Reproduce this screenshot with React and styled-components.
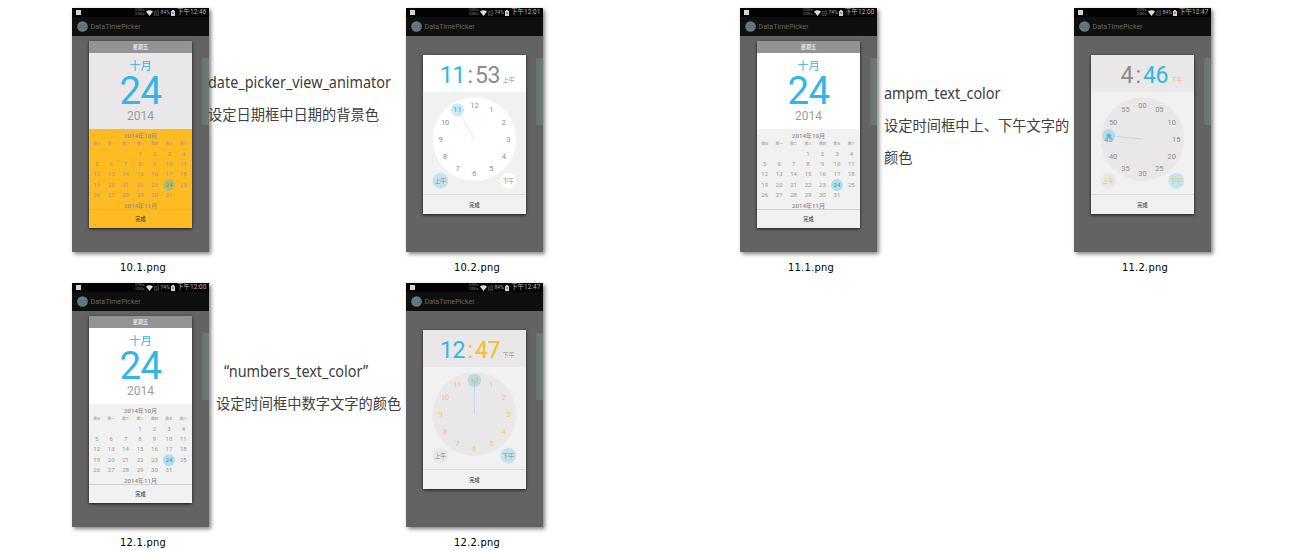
import React from "react";
import styled, { createGlobalStyle } from "styled-components";

const Global = createGlobalStyle`
  body { margin: 0; background: #fff; overflow: hidden; }
  * { box-sizing: border-box; }
`;

const cjk = `"Noto Sans CJK SC", sans-serif`;
const BLUE = "#33b5e5";
const GREY = "#8c8c8c";
const AMBER = "#ffbb22";
const MIST = "#e9e7e8";

const Page = styled.main`
  width: 1290px;
  height: 550px;
  padding: 8px 0 0 72px;
  display: grid;
  grid-template-columns: repeat(4, 334px);
  grid-auto-rows: 275px;
  align-content: start;
  overflow: hidden;
`;
const Cell = styled.section`
  grid-column: ${(p) => p.$col};
  grid-row: ${(p) => p.$row};
  display: flex;
  align-items: flex-start;
`;
const Figure = styled.figure`
  margin: 0;
  width: 137px;
  flex: none;
`;
const Caption = styled.figcaption`
  padding: 8px 0 0 5px;
  text-align: center;
  font: 11px/16px "DejaVu Sans Condensed", "DejaVu Sans", sans-serif;
  font-stretch: condensed;
  letter-spacing: 0.25px;
  color: #000;
`;
const Screen = styled.div`
  width: 137px;
  height: 244px;
  background: #636363;
  box-shadow: 2px 2px 4px rgba(0, 0, 0, 0.5);
  display: grid;
  grid-template: 9px 19px 216px / 17px 103px 10px 7px;
  font-family: Roboto, ${cjk};
`;
const StatusBar = styled.div`
  grid-column: 1 / -1;
  background: #030303;
  display: flex;
  align-items: center;
  padding: 0 2.5px 0 4px;
  gap: 1.4px;
  color: #aaa;
  font-size: 5px;
  line-height: 9px;
  white-space: nowrap;
`;
const Notice = styled.span`
  width: 5px;
  height: 5.5px;
  background: #d4d4d4;
  margin-right: auto;
`;
const Rates = styled.span`
  display: flex;
  flex-direction: column;
  font-size: 2.6px;
  line-height: 3.4px;
  text-align: right;
  color: #999;
`;
const Clock = styled.span`
  font-size: 6.4px;
  letter-spacing: 0.1px;
  margin-left: 0.5px;
  color: #b8b8b8;
`;
const AppBar = styled.div`
  grid-column: 1 / -1;
  background: #0f0f0f;
  display: flex;
  align-items: center;
  gap: 2.5px;
  padding-left: 5px;
  color: #666;
  font-size: 7px;
  letter-spacing: 0.05px;
`;
const Slider = styled.div`
  grid-column: 4;
  grid-row: 3;
  margin-top: 22px;
  height: 67px;
  background: linear-gradient(90deg, #697371, #6f7a78);
`;
const Dialog = styled.div`
  grid-column: 2;
  grid-row: 3;
  margin-top: ${(p) => p.$top}px;
  height: ${(p) => p.$height}px;
  background: ${(p) => p.$bg || "#f1f1f1"};
  box-shadow: 0 1px 3px rgba(0, 0, 0, 0.75);
  display: flex;
  flex-direction: column;
`;
const Weekday = styled.div`
  height: 11.5px;
  background: #939393;
  color: #f0f0f0;
  font: 500 5.2px/12px ${cjk};
  text-align: center;
`;
const DayPanel = styled.div`
  height: 76.5px;
  background: ${(p) => p.$bg};
  color: ${BLUE};
  display: flex;
  flex-direction: column;
  align-items: center;
  padding-top: 6px;
`;
const Month = styled.div`
  font: 400 11.3px/13px ${cjk};
`;
const Day = styled.div`
  font-size: 38.5px;
  line-height: 38px;
  height: 38px;
  letter-spacing: -0.7px;
`;
const Year = styled.div`
  font-size: 12px;
  line-height: 13px;
  color: #9c9c9c;
`;
const Calendar = styled.div`
  height: 81px;
  overflow: hidden;
  border-bottom: 1px solid rgba(175, 175, 175, 0.5);
`;
const MonthTitle = styled.div`
  text-align: center;
  font: 500 6.1px/8px Roboto, ${cjk};
  color: #8d8d88;
  padding-top: ${(p) => p.$pad}px;
`;
const Week = styled.div`
  display: grid;
  grid-template-columns: repeat(7, 14.45px);
  height: ${(p) => (p.$head ? 8 : 10.1)}px;
  align-items: center;
  justify-items: center;
  font-size: ${(p) => (p.$head ? 3.6 : 6)}px;
  font-weight: ${(p) => (p.$head ? 500 : 400)};
  color: #9a9a96;
  line-height: 1;
  padding-left: 0.5px;
`;
const DateCell = styled.span`
  width: 12px;
  height: 12px;
  line-height: 12px;
  text-align: center;
  border-radius: 50%;
  background: ${(p) => (p.$on ? "rgba(51,181,229,0.32)" : "transparent")};
  color: ${(p) => (p.$on ? "#2f9dbd" : "inherit")};
`;
const Done = styled.div`
  flex: 1;
  display: flex;
  align-items: center;
  justify-content: center;
  font: 500 5.2px/8px ${cjk};
  color: #444;
`;
const TimeHead = styled.div`
  height: 37px;
  background: ${(p) => p.$bg};
  display: grid;
  grid-template-columns: 42px 10px 27px auto;
  align-items: center;
  font-size: 23px;
  line-height: 38px;
  padding-top: 2px;
`;
const Digits = styled.span`
  color: ${(p) => p.$color};
  text-align: ${(p) => p.$align || "left"};
  letter-spacing: -0.4px;
`;
const Half = styled.span`
  font: 400 6px/8px ${cjk};
  color: ${(p) => p.$color};
  padding: 8px 0 0 0.7px;
`;
const Dial = styled.svg`
  height: 103px;
  width: 103px;
  flex: none;
  display: block;
  border-bottom: 1px solid #dcdcdc;
  font-family: Roboto, ${cjk};
`;
const Note = styled.div`
  margin: ${(p) => p.$top}px 0 0 ${(p) => p.$left}px;
  color: #404040;
  white-space: nowrap;
`;
const Line = styled.p`
  margin: 0 0 0 ${(p) => p.$indent || 0}px;
  font: 14.25px/32px ${cjk};
`;
const Code = styled(Line)`
  font: 16px/32px "Noto Sans", ${cjk};
  transform: scaleX(0.9);
  transform-origin: left;
  width: max-content;
`;

function Status({ time, battery }) {
  return (
    <StatusBar>
      <Notice />
      <Rates><span>0.01K/s</span><span>0.02K/s</span></Rates>
      <svg width="7" height="6" viewBox="0 0 7 6"><path d="M0 1.5Q3.5-1 7 1.5L3.5 6Z" fill="#dedede" /></svg>
      <svg width="5" height="6" viewBox="0 0 5 6"><path d="M.5 1.5h1.5v4H.5zM3 .5h1.5v5H3z" fill="none" stroke="#555" strokeWidth=".7" /></svg>
      <span>{battery}%</span>
      <svg width="4" height="6" viewBox="0 0 4 6"><path d="M1 0h2v1h1v5H0V1h1z" fill="#d0d0d0" /><path d="M1 2.5h2v1H1z" fill="#555" /></svg>
      <Clock>下午{time}</Clock>
    </StatusBar>
  );
}

function Phone({ name, time, battery, children }) {
  return (
    <Figure>
      <Screen>
        <Status time={time} battery={battery} />
        <AppBar>
          <svg width="11" height="11" viewBox="0 0 11 11">
            <circle cx="5.5" cy="5.5" r="5.3" fill="#6b777b" />
            <path d="M.5 4.3h10v2.5H.5z" fill="#44707f" />
            <path d="M2 5.5h7" stroke="#839ba3" strokeWidth=".7" strokeDasharray="1 .6" />
          </svg>
          DataTimePicker
        </AppBar>
        {children}
        <Slider />
      </Screen>
      <Caption>{name}</Caption>
    </Figure>
  );
}

const weekdays = ["周日", "周一", "周二", "周三", "周四", "周五", "周六"];
const weeks = [0, 1, 2, 3, 4].map((w) =>
  [0, 1, 2, 3, 4, 5, 6].map((d) => {
    const n = w * 7 + d - 2;
    return n > 0 && n < 32 ? n : "";
  })
);

function DatePicker({ bg, panel = "#fff" }) {
  return (
    <Dialog $top={5.3} $height={187} $bg={bg}>
      <Weekday>星期五</Weekday>
      <DayPanel $bg={panel}>
        <Month>十月</Month>
        <Day>24</Day>
        <Year>2014</Year>
      </DayPanel>
      <Calendar>
        <MonthTitle $pad={3}>2014年10月</MonthTitle>
        <Week $head>{weekdays.map((d) => <span key={d}>{d}</span>)}</Week>
        {weeks.map((w, i) => (
          <Week key={i}>{w.map((d, j) => <DateCell key={j} $on={d === 24}>{d}</DateCell>)}</Week>
        ))}
        <MonthTitle $pad={3.6}>2014年11月</MonthTitle>
      </Calendar>
      <Done>完成</Done>
    </Dialog>
  );
}

const CX = 51.4;
const CY = 47.6;
const at = (turn, r) => [CX + r * Math.sin(turn * 2 * Math.PI), CY - r * Math.cos(turn * 2 * Math.PI)];

function TimePicker(p) {
  const [hx, hy] = at(p.turn, 34.2);
  const labels = Array.from({ length: 12 }, (_, i) => (p.minutes ? String(i * 5).padStart(2, "0") : String(i || 12)));
  const halves = [["上午", 17, p.half === "上午"], ["下午", 85.7, p.half === "下午"]];
  return (
    <Dialog $top={19.3} $height={158.7}>
      <TimeHead $bg={p.face}>
        <Digits $color={p.hourColor} $align="right">{p.hour}</Digits>
        <Digits $color={p.colonColor} $align="center">:</Digits>
        <Digits $color={p.minuteColor}>{p.minute}</Digits>
        <Half $color={p.halfColor}>{p.half}</Half>
      </TimeHead>
      <Dial viewBox="0 0 103 103">
        <circle cx={CX} cy={CY} r="42.2" fill={p.face} />
        {labels.map((t, i) => {
          const [x, y] = at(i / 12, 34.2);
          return <text key={t} x={x} y={y + 2.6} fontSize="7.5" textAnchor="middle" fill={p.numberColor}>{t}</text>;
        })}
        <line x1={CX} y1={CY} x2={hx} y2={hy} stroke={BLUE} strokeOpacity=".3" strokeWidth=".8" />
        <circle cx={hx} cy={hy} r="6.7" fill={BLUE} fillOpacity=".25" />
        {p.minutes && <circle cx={hx} cy={hy} r="2.2" fill={BLUE} fillOpacity=".85" />}
        {halves.map(([t, x, on]) => (
          <g key={t}>
            <circle cx={x} cy="89.7" r="7.9" fill={on ? "#c3e3ee" : p.face} />
            <text x={x} y="91.9" fontSize="6" textAnchor="middle" fill={p.halfColor}>{t}</text>
          </g>
        ))}
      </Dial>
      <Done>完成</Done>
    </Dialog>
  );
}

export default function App() {
  return (
    <>
      <Global />
      <Page>
        <Cell $col={1} $row={1}>
          <Phone name="10.1.png" time="12:46" battery={84}><DatePicker bg={AMBER} panel={MIST} /></Phone>
          <Note $top={58} $left={-1}>
            <Code>date_picker_view_animator</Code>
            <Line>设定日期框中日期的背景色</Line>
          </Note>
        </Cell>
        <Cell $col={2} $row={1}>
          <Phone name="10.2.png" time="12:01" battery={74}>
            <TimePicker face="#fff" hour="11" minute="53" half="上午" turn={11 / 12}
              hourColor={BLUE} colonColor={GREY} minuteColor={GREY} halfColor={GREY} numberColor={GREY} />
          </Phone>
        </Cell>
        <Cell $col={3} $row={1}>
          <Phone name="11.1.png" time="12:00" battery={74}><DatePicker /></Phone>
          <Note $top={69} $left={7}>
            <Code>ampm_text_color</Code>
            <Line>设定时间框中上、下午文字的</Line>
            <Line>颜色</Line>
          </Note>
        </Cell>
        <Cell $col={4} $row={1}>
          <Phone name="11.2.png" time="12:47" battery={84}>
            <TimePicker minutes face={MIST} hour="4" minute="46" half="下午" turn={46 / 60}
              hourColor={GREY} colonColor={GREY} minuteColor={BLUE} halfColor="#f7c244" numberColor={GREY} />
          </Phone>
        </Cell>
        <Cell $col={1} $row={2}>
          <Phone name="12.1.png" time="12:00" battery={74}><DatePicker /></Phone>
          <Note $top={72} $left={7}>
            <Code $indent={8}>“numbers_text_color”</Code>
            <Line>设定时间框中数字文字的颜色</Line>
          </Note>
        </Cell>
        <Cell $col={2} $row={2}>
          <Phone name="12.2.png" time="12:47" battery={84}>
            <TimePicker face={MIST} hour="12" minute="47" half="下午" turn={0}
              hourColor={BLUE} colonColor={AMBER} minuteColor={AMBER} halfColor={GREY} numberColor="#fbc34a" />
          </Phone>
        </Cell>
      </Page>
    </>
  );
}
